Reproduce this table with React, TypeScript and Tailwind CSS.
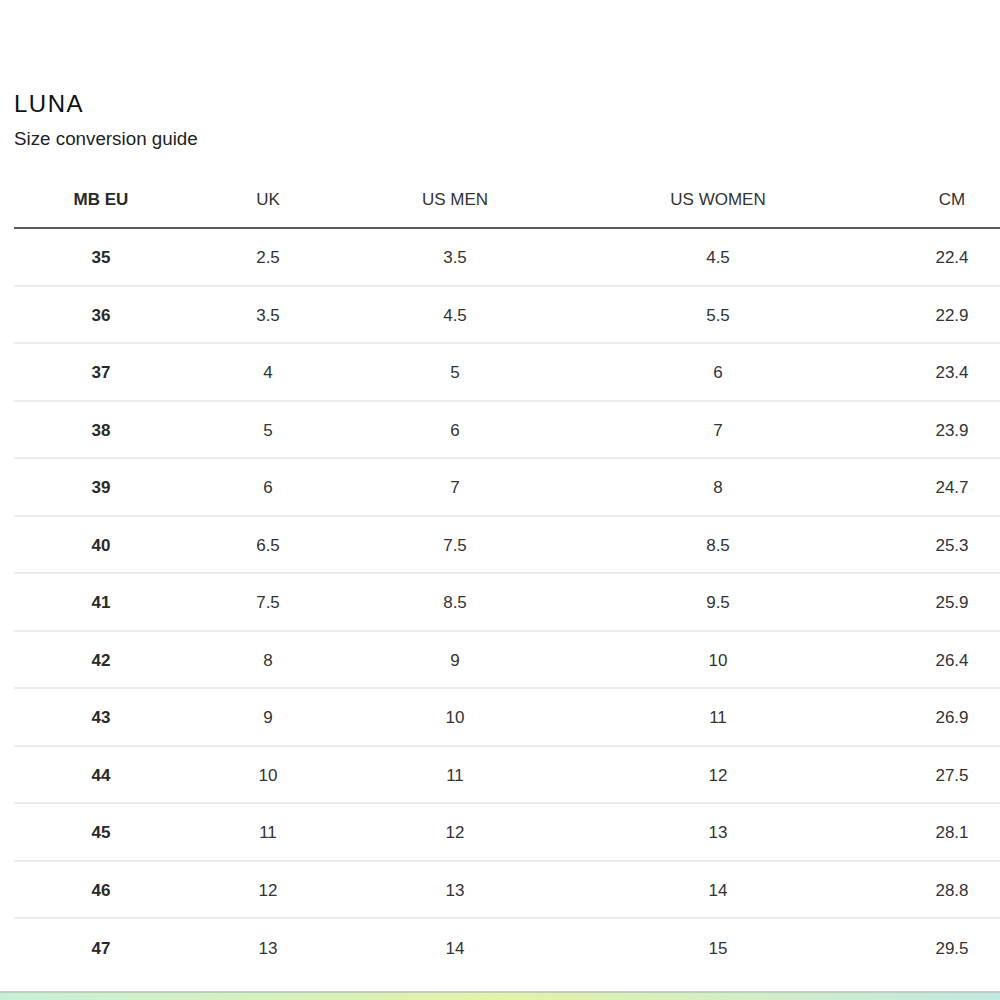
const rows = [
  ["35", "2.5", "3.5", "4.5", "22.4"],
  ["36", "3.5", "4.5", "5.5", "22.9"],
  ["37", "4", "5", "6", "23.4"],
  ["38", "5", "6", "7", "23.9"],
  ["39", "6", "7", "8", "24.7"],
  ["40", "6.5", "7.5", "8.5", "25.3"],
  ["41", "7.5", "8.5", "9.5", "25.9"],
  ["42", "8", "9", "10", "26.4"],
  ["43", "9", "10", "11", "26.9"],
  ["44", "10", "11", "12", "27.5"],
  ["45", "11", "12", "13", "28.1"],
  ["46", "12", "13", "14", "28.8"],
  ["47", "13", "14", "15", "29.5"],
];

const headers = ["MB EU", "UK", "US MEN", "US WOMEN", "CM"];

// column cells, widths picked so the text centres line up
const colClass = [
  "w-[174px] text-center font-bold text-[#2a2a2a]",
  "w-[160px] text-center",
  "w-[214px] text-center",
  "w-[312px] text-center",
  "w-[126px] pl-[30px] text-center",
];

export default function App() {
  return (
    <div
      className="w-full h-screen overflow-hidden bg-white text-[#333] flex flex-col"
      style={{ fontFamily: '"Liberation Sans", Arial, sans-serif' }}
    >
      <div className="pt-[89px] pl-[14px]">
        {/* Heading */}
        <h1 className="text-[24px] leading-[30px] tracking-[1.5px] text-[#111]">LUNA</h1>
        <p className="mt-[8px] text-[18.8px] leading-[24px] text-[#222]">Size conversion guide</p>

        {/* Table */}
        <div className="mt-[21px]">
          <div className="flex items-center h-[57px] border-b-2 border-[#5a5a5a] text-[17px]">
            {headers.map((h, i) => (
              <div key={h} className={colClass[i]}>
                {h}
              </div>
            ))}
          </div>
          {rows.map((r, ri) => (
            <div
              key={r[0]}
              className={
                ri === rows.length - 1
                  ? "flex items-center pt-[2px] h-[57.5px] text-[17px]"
                  : "flex items-center pt-[2px] h-[57.5px] border-b-2 border-[#ececec] text-[17px]"
              }
            >
              {r.map((c, i) => (
                <div key={i} className={colClass[i]}>
                  {c}
                </div>
              ))}
            </div>
          ))}
        </div>
      </div>

      {/* Bottom strip */}
      <div className="mt-auto h-[9px] border-t-2 border-[#c4c8c4] bg-gradient-to-r from-[#c6f0d6] via-[#e2f3a8] to-[#bfe8e0] shrink-0" />
    </div>
  );
}
